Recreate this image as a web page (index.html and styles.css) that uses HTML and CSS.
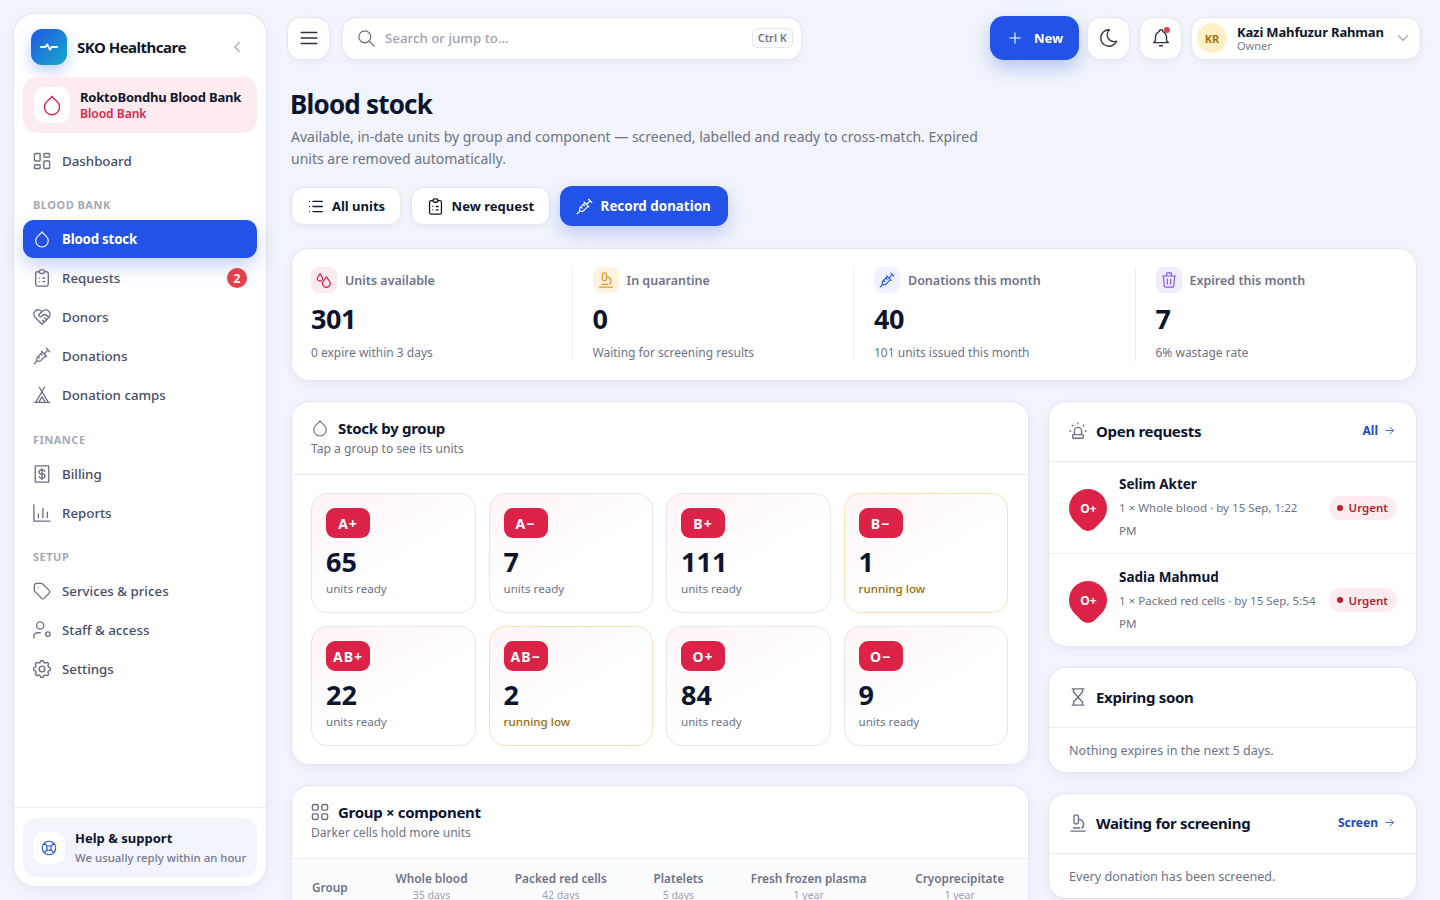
FILE: index.html
```html
<!DOCTYPE html>
<html lang="en">
<head>
    <meta charset="UTF-8">
    <meta name="viewport" content="width=device-width, initial-scale=1.0">
    <title>Blood stock - SKO Healthcare</title>
    <link rel="stylesheet" href="styles.css">
</head>
<body>

<!-- icon sprite -->
<svg class="sprite" xmlns="http://www.w3.org/2000/svg">
    <symbol id="i-drop" viewBox="0 0 24 24"><path d="M12 2.500c1.500 2.500 3.500 3.800 5.500 5.600a8.300 8.300 0 1 1 -11 0c2 -1.800 4 -3.100 5.500 -5.600z"/></symbol>
    <symbol id="i-drops" viewBox="2 2 20 20"><path d="M7 4l-2.300 3.800a3.200 3.200 0 1 0 4.600 0z"/><path d="M15 8l-3.700 5.500a4.700 4.700 0 1 0 7.400 0z"/></symbol>
    <symbol id="i-dash" viewBox="2.500 2.500 19 19"><path d="M5 4h4a1 1 0 0 1 1 1v6a1 1 0 0 1-1 1h-4a1 1 0 0 1-1-1v-6a1 1 0 0 1 1-1M5 16h4a1 1 0 0 1 1 1v2a1 1 0 0 1-1 1h-4a1 1 0 0 1-1-1v-2a1 1 0 0 1 1-1M15 12h4a1 1 0 0 1 1 1v6a1 1 0 0 1-1 1h-4a1 1 0 0 1-1-1v-6a1 1 0 0 1 1-1M15 4h4a1 1 0 0 1 1 1v2a1 1 0 0 1-1 1h-4a1 1 0 0 1-1-1v-2a1 1 0 0 1 1-1"/></symbol>
    <symbol id="i-grid" viewBox="2.500 2.500 19 19"><rect x="4" y="4" width="6" height="6" rx="1.500"/><rect x="14" y="4" width="6" height="6" rx="1.500"/><rect x="4" y="14" width="6" height="6" rx="1.500"/><rect x="14" y="14" width="6" height="6" rx="1.500"/></symbol>
    <symbol id="i-clip" viewBox="4 2 16 20"><path d="M9 5h-2a2 2 0 0 0 -2 2v12a2 2 0 0 0 2 2h10a2 2 0 0 0 2 -2v-12a2 2 0 0 0 -2 -2h-2"/><path d="M9 5a2 2 0 0 1 2 -2h2a2 2 0 0 1 2 2v0a2 2 0 0 1 -2 2h-2a2 2 0 0 1 -2 -2z"/><path d="M9 12h.01M13 12h2M9 16h.01M13 16h2"/></symbol>
    <symbol id="i-heart" viewBox="2 2 20 20"><path d="M19.500 12.572l-7.500 7.428l-7.500 -7.428a5 5 0 1 1 7.500 -6.566a5 5 0 1 1 7.500 6.572"/><path d="M12 6l-3.293 3.293a1 1 0 0 0 0 1.414l.543 .543c.69 .69 1.810 .69 2.500 0l1 -1a3.182 3.182 0 0 1 4.500 0l2.250 2.250"/><path d="M12.500 15.500l2 2M15 13l2 2"/></symbol>
    <symbol id="i-syringe" viewBox="1.500 1.500 21 21"><path d="M17 3l4 4M19 5l-4.500 4.500M11.500 6.500l6 6M16.500 11.500l-6.500 6.500h-4v-4l6.500 -6.500M7.500 12.500l1.500 1.500M10.500 9.500l1.500 1.500M3 21l3 -3"/></symbol>
    <symbol id="i-tent" viewBox="1.500 1.500 21 21"><path d="M15 3l-10 17M9 3l10 17M3 20.500h18M8.500 20l3.500 -6l3.500 6"/></symbol>
    <symbol id="i-bill" viewBox="3 2 18 20"><path d="M4.500 3h15v18h-15z" stroke-dasharray="2 .6"/><path d="M15 9a2 2 0 0 0 -2 -1.500h-2a2.200 2.200 0 0 0 0 4.500h2a2.200 2.200 0 0 1 0 4.500h-2a2 2 0 0 1 -2 -1.500M12 6v12"/></symbol>
    <symbol id="i-chart" viewBox="2 2 20 20"><path d="M3 3v18h18M8 17v-4M13 17v-10M18 17v-6"/></symbol>
    <symbol id="i-tag" viewBox="1.500 1.500 21 21"><path d="M3 6v5.172a2 2 0 0 0 .586 1.414l7.710 7.710a2.410 2.410 0 0 0 3.408 0l5.592 -5.592a2.410 2.410 0 0 0 0 -3.408l-7.710 -7.710a2 2 0 0 0 -1.414 -.586h-5.172a3 3 0 0 0 -3 3z"/><path d="M7.500 7.500h.01"/></symbol>
    <symbol id="i-staff" viewBox="2 2 20 20"><circle cx="10" cy="7" r="4"/><path d="M3 21v-2a4 4 0 0 1 4 -4h3"/><circle cx="18.500" cy="16.500" r="2.500"/></symbol>
    <symbol id="i-gear" viewBox="2.500 2.500 19 19"><path d="M10.325 4.317c.426 -1.756 2.924 -1.756 3.350 0a1.724 1.724 0 0 0 2.573 1.066c1.543 -.94 3.310 .826 2.370 2.370a1.724 1.724 0 0 0 1.065 2.572c1.756 .426 1.756 2.924 0 3.350a1.724 1.724 0 0 0 -1.066 2.573c.94 1.543 -.826 3.310 -2.370 2.370a1.724 1.724 0 0 0 -2.572 1.065c-.426 1.756 -2.924 1.756 -3.350 0a1.724 1.724 0 0 0 -2.573 -1.066c-1.543 .94 -3.310 -.826 -2.370 -2.370a1.724 1.724 0 0 0 -1.065 -2.572c-1.756 -.426 -1.756 -2.924 0 -3.350a1.724 1.724 0 0 0 1.066 -2.573c-.94 -1.543 .826 -3.310 2.370 -2.370c1 .608 2.296 .07 2.572 -1.065z"/><path d="M9 12a3 3 0 1 0 6 0a3 3 0 0 0 -6 0"/></symbol>
    <symbol id="i-buoy" viewBox="0 0 24 24"><path d="M9 12a3 3 0 1 0 6 0a3 3 0 1 0 -6 0M3 12a9 9 0 1 0 18 0a9 9 0 1 0 -18 0M15 15l3.350 3.350M9 15l-3.350 3.350M5.650 5.650l3.350 3.350M18.350 5.650l-3.350 3.350"/></symbol>
    <symbol id="i-scope" viewBox="2 2 20 20"><path d="M4 21h16M7 17.500h7"/><rect x="7.500" y="3" width="5" height="10" rx="2.500"/><path d="M13 8a5.500 5.500 0 0 1 3.500 9.500"/></symbol>
    <symbol id="i-trash" viewBox="2 2 20 20"><path d="M4 7h16M10 11v6M14 11v6M5 7l1 12a2 2 0 0 0 2 2h8a2 2 0 0 0 2 -2l1 -12M9 7v-3a1 1 0 0 1 1 -1h4a1 1 0 0 1 1 1v3"/></symbol>
    <symbol id="i-alarm" viewBox="2 2 20 20"><path d="M8 16v-4a4 4 0 0 1 8 0v4M3 12h1M12 3v1M20 12h1M5.600 5.600l.7 .7M18.400 5.600l-.7 .7"/><rect x="6" y="16" width="12" height="4" rx="1"/></symbol>
    <symbol id="i-glass" viewBox="2 2 20 20"><path d="M5.500 3h13M5.500 21h13M7 3v3.500l5 5.500l5 5.500v3.500M17 3v3.500l-5 5.500l-5 5.500v3.500"/></symbol>
    <symbol id="i-arrow" viewBox="0 0 24 24"><path d="M5 12h14M13 18l6 -6M13 6l6 6"/></symbol>
</svg>

<div class="app">

    <aside class="sidebar">
        <div class="brand">
            <div class="brand-logo">
                <svg class="ic" viewBox="2 2 20 20"><path d="M3 12h5l2 -3l3 6l2 -3h6"/></svg>
            </div>
            <div class="brand-name">SKO Healthcare</div>
            <svg class="ic brand-toggle" viewBox="0 0 24 24"><path d="M15 6l-6 6l6 6"/></svg>
        </div>

        <div class="org">
            <div class="org-icon"><svg class="ic"><use href="#i-drop"/></svg></div>
            <div>
                <div class="org-name">RoktoBondhu Blood Bank</div>
                <div class="org-type">Blood Bank</div>
            </div>
        </div>

        <nav class="nav">
            <a class="nav-item"><svg class="ic"><use href="#i-dash"/></svg>Dashboard</a>

            <div class="nav-label">Blood bank</div>
            <a class="nav-item active"><svg class="ic"><use href="#i-drop"/></svg>Blood stock</a>
            <a class="nav-item"><svg class="ic"><use href="#i-clip"/></svg>Requests<span class="nav-badge">2</span></a>
            <a class="nav-item"><svg class="ic"><use href="#i-heart"/></svg>Donors</a>
            <a class="nav-item"><svg class="ic"><use href="#i-syringe"/></svg>Donations</a>
            <a class="nav-item"><svg class="ic"><use href="#i-tent"/></svg>Donation camps</a>

            <div class="nav-label">Finance</div>
            <a class="nav-item"><svg class="ic"><use href="#i-bill"/></svg>Billing</a>
            <a class="nav-item"><svg class="ic"><use href="#i-chart"/></svg>Reports</a>

            <div class="nav-label">Setup</div>
            <a class="nav-item"><svg class="ic"><use href="#i-tag"/></svg>Services &amp; prices</a>
            <a class="nav-item"><svg class="ic"><use href="#i-staff"/></svg>Staff &amp; access</a>
            <a class="nav-item"><svg class="ic"><use href="#i-gear"/></svg>Settings</a>
        </nav>

        <div class="side-foot">
            <div class="help">
                <div class="help-icon"><svg class="ic"><use href="#i-buoy"/></svg></div>
                <div>
                    <div class="help-title">Help &amp; support</div>
                    <div class="help-sub">We usually reply within an hour</div>
                </div>
            </div>
        </div>
    </aside>

    <main class="main">
        <header class="topbar">
            <button class="icon-btn menu">
                <svg class="ic" viewBox="0 0 24 24"><path d="M3.500 6h17M3.500 12h17M3.500 18h17"/></svg>
            </button>
            <div class="search">
                <svg class="ic" viewBox="2 2 20 20"><path d="M3 10a7 7 0 1 0 14 0a7 7 0 1 0 -14 0M21 21l-6 -6"/></svg>
                <span class="search-text">Search or jump to...</span>
                <span class="kbd">Ctrl K</span>
            </div>
            <button class="btn-new">
                <svg class="ic" viewBox="0 0 24 24"><path d="M12 5v14M5 12h14"/></svg>New
            </button>
            <button class="icon-btn">
                <svg class="ic" viewBox="0 0 24 24"><path d="M12 3c.132 0 .263 0 .393 0a7.500 7.500 0 0 0 7.920 12.446a9 9 0 1 1 -8.313 -12.454z"/></svg>
            </button>
            <button class="icon-btn bell">
                <svg class="ic" viewBox="0 0 24 24"><path d="M10 5a2 2 0 1 1 4 0a7 7 0 0 1 4 6v3a4 4 0 0 0 2 3h-16a4 4 0 0 0 2 -3v-3a7 7 0 0 1 4 -6M10.500 20.500h3"/></svg>
                <span class="bell-dot"></span>
            </button>
            <div class="user">
                <div class="user-avatar">KR</div>
                <div class="user-info">
                    <div class="user-name">Kazi Mahfuzur Rahman</div>
                    <div class="user-role">Owner</div>
                </div>
                <svg class="ic" viewBox="0 0 24 24"><path d="M6 9l6 6l6 -6"/></svg>
            </div>
        </header>

        <div class="content">
            <h1 class="page-title">Blood stock</h1>
            <p class="page-desc">Available, in-date units by group and component — screened, labelled and ready to cross-match. Expired units are removed automatically.</p>

            <div class="actions">
                <button class="btn"><svg class="ic" viewBox="2 2 20 20"><path d="M9 6h11M9 12h11M9 18h11M5 6v.01M5 12v.01M5 18v.01"/></svg>All units</button>
                <button class="btn"><svg class="ic"><use href="#i-clip"/></svg>New request</button>
                <button class="btn primary"><svg class="ic"><use href="#i-syringe"/></svg>Record donation</button>
            </div>

            <section class="card stats">
                <div class="stat">
                    <div class="stat-head"><span class="chip red"><svg class="ic"><use href="#i-drops"/></svg></span>Units available</div>
                    <div class="stat-num">301</div>
                    <div class="stat-sub">0 expire within 3 days</div>
                </div>
                <div class="stat">
                    <div class="stat-head"><span class="chip amber"><svg class="ic"><use href="#i-scope"/></svg></span>In quarantine</div>
                    <div class="stat-num">0</div>
                    <div class="stat-sub">Waiting for screening results</div>
                </div>
                <div class="stat">
                    <div class="stat-head"><span class="chip blue"><svg class="ic"><use href="#i-syringe"/></svg></span>Donations this month</div>
                    <div class="stat-num">40</div>
                    <div class="stat-sub">101 units issued this month</div>
                </div>
                <div class="stat">
                    <div class="stat-head"><span class="chip violet"><svg class="ic"><use href="#i-trash"/></svg></span>Expired this month</div>
                    <div class="stat-num">7</div>
                    <div class="stat-sub">6% wastage rate</div>
                </div>
            </section>

            <div class="columns">
                <div class="col">
                    <section class="card">
                        <div class="card-head tall">
                            <div class="card-title"><svg class="ic"><use href="#i-drop"/></svg>Stock by group</div>
                            <div class="card-sub">Tap a group to see its units</div>
                        </div>
                        <div class="groups">
                            <div class="tile"><span class="blood">A+</span><div class="tile-num">65</div><div class="tile-sub">units ready</div></div>
                            <div class="tile"><span class="blood">A−</span><div class="tile-num">7</div><div class="tile-sub">units ready</div></div>
                            <div class="tile"><span class="blood">B+</span><div class="tile-num">111</div><div class="tile-sub">units ready</div></div>
                            <div class="tile low"><span class="blood">B−</span><div class="tile-num">1</div><div class="tile-sub">running low</div></div>
                            <div class="tile"><span class="blood">AB+</span><div class="tile-num">22</div><div class="tile-sub">units ready</div></div>
                            <div class="tile low"><span class="blood">AB−</span><div class="tile-num">2</div><div class="tile-sub">running low</div></div>
                            <div class="tile"><span class="blood">O+</span><div class="tile-num">84</div><div class="tile-sub">units ready</div></div>
                            <div class="tile"><span class="blood">O−</span><div class="tile-num">9</div><div class="tile-sub">units ready</div></div>
                        </div>
                    </section>

                    <section class="card">
                        <div class="card-head tall">
                            <div class="card-title"><svg class="ic"><use href="#i-grid"/></svg>Group × component</div>
                            <div class="card-sub">Darker cells hold more units</div>
                        </div>
                        <table class="matrix">
                            <thead>
                                <tr>
                                    <th>Group</th>
                                    <th>Whole blood<small>35 days</small></th>
                                    <th>Packed red cells<small>42 days</small></th>
                                    <th>Platelets<small>5 days</small></th>
                                    <th>Fresh frozen plasma<small>1 year</small></th>
                                    <th>Cryoprecipitate<small>1 year</small></th>
                                </tr>
                            </thead>
                        </table>
                    </section>
                </div>

                <div class="col">
                    <section class="card">
                        <div class="card-head row">
                            <div class="card-title"><svg class="ic"><use href="#i-alarm"/></svg>Open requests</div>
                            <a class="card-link">All<svg class="ic"><use href="#i-arrow"/></svg></a>
                        </div>
                        <div class="req">
                            <div class="drop"><span>O+</span></div>
                            <div class="req-info">
                                <div class="req-name">Selim Akter</div>
                                <div class="req-meta">1 × Whole blood · by 15 Sep, 1:22 PM</div>
                            </div>
                            <span class="urgent">Urgent</span>
                        </div>
                        <div class="req">
                            <div class="drop"><span>O+</span></div>
                            <div class="req-info">
                                <div class="req-name">Sadia Mahmud</div>
                                <div class="req-meta">1 × Packed red cells · by 15 Sep, 5:54 PM</div>
                            </div>
                            <span class="urgent">Urgent</span>
                        </div>
                    </section>

                    <section class="card">
                        <div class="card-head row">
                            <div class="card-title"><svg class="ic"><use href="#i-glass"/></svg>Expiring soon</div>
                        </div>
                        <div class="empty">Nothing expires in the next 5 days.</div>
                    </section>

                    <section class="card">
                        <div class="card-head row">
                            <div class="card-title"><svg class="ic"><use href="#i-scope"/></svg>Waiting for screening</div>
                            <a class="card-link">Screen<svg class="ic"><use href="#i-arrow"/></svg></a>
                        </div>
                        <div class="empty">Every donation has been screened.</div>
                    </section>
                </div>
            </div>
        </div>
    </main>
</div>

</body>
</html>
```

FILE: styles.css
```css
* {
    margin: 0;
    padding: 0;
    box-sizing: border-box;
}

html, body {
    height: 100%;
    overflow: hidden;
}

body {
    background-color: #f1f4fb;
    color: #0f172a;
    font-family: "Noto Sans", "Open Sans", sans-serif;
    font-size: 14px;
}

button {
    font-family: inherit;
    cursor: pointer;
}

.sprite {
    display: none;
}

.ic {
    width: 18px;
    height: 18px;
    flex: none;
    fill: none;
    stroke: currentColor;
    stroke-width: 1.5;
    stroke-linecap: round;
    stroke-linejoin: round;
}

.app {
    display: flex;
    height: 900px;
    gap: 20px;
}

/* sidebar */

.sidebar {
    width: 254px;
    flex: none;
    margin: 13px 0 13px 13px;
    display: flex;
    flex-direction: column;
    background-color: #fff;
    border: 1px solid #e3e6ee;
    border-radius: 22px;
    box-shadow: 0 4px 14px rgba(30, 50, 100, 0.05);
}

.brand {
    display: flex;
    align-items: center;
    gap: 10px;
    padding: 15px 20px 12px 17px;
}

.brand-logo {
    width: 36px;
    height: 36px;
    display: flex;
    align-items: center;
    justify-content: center;
    color: #fff;
    border-radius: 11px;
    background: linear-gradient(135deg, #2456e8, #14a9c4);
    box-shadow: 0 6px 14px rgba(36, 86, 232, 0.28);
}

.brand-logo .ic {
    stroke-width: 2;
}

.brand-name {
    flex: 1;
    font-size: 15px;
    font-weight: 700;
    letter-spacing: -0.5px;
}

.brand-toggle {
    color: #9ca3b4;
}

.org {
    display: flex;
    align-items: center;
    gap: 10px;
    height: 56px;
    margin: 0 9px;
    padding: 0 11px;
    background-color: #fdecef;
    border-radius: 14px;
}

.org-icon {
    width: 36px;
    height: 36px;
    display: flex;
    align-items: center;
    justify-content: center;
    flex: none;
    background-color: #fff;
    color: #d9264a;
    border-radius: 11px;
}

.org-icon .ic {
    width: 22px;
    height: 22px;
}

.org-name {
    font-size: 13px;
    font-weight: 700;
    line-height: 18px;
    letter-spacing: -0.2px;
    white-space: nowrap;
}

.org-type {
    font-size: 12px;
    font-weight: 600;
    line-height: 16px;
    color: #d9264a;
}

.nav {
    flex: 1;
    display: flex;
    flex-direction: column;
    gap: 1px;
    padding: 9px 9px 0;
}

.nav-item {
    display: flex;
    align-items: center;
    gap: 11px;
    height: 38px;
    flex: none;
    padding: 0 10px;
    font-size: 13.3px;
    font-weight: 500;
    color: #474d66;
    border-radius: 11px;
}

.nav-item .ic {
    color: #6b7186;
}

.nav-item.active {
    background-color: #2352e8;
    color: #fff;
    font-weight: 700;
    letter-spacing: -0.2px;
    box-shadow: 0 8px 18px rgba(35, 82, 232, 0.25);
}

.nav-item.active .ic {
    color: #fff;
}

.nav-badge {
    margin-left: auto;
    width: 20px;
    height: 20px;
    display: flex;
    align-items: center;
    justify-content: center;
    background-color: #e5404a;
    color: #fff;
    border-radius: 50%;
    font-size: 12px;
    font-weight: 700;
}

.nav-label {
    padding: 16.5px 10px 7px;
    font-size: 11px;
    line-height: 15px;
    font-weight: 700;
    letter-spacing: 0.5px;
    text-transform: uppercase;
    color: #a4a9b8;
}

.nav-item:first-child + .nav-label {
    padding-top: 16px;
}

.side-foot {
    padding: 10px 9px 9px;
    border-top: 1px solid #eceef3;
}

.help {
    display: flex;
    align-items: center;
    gap: 10px;
    height: 59px;
    padding: 0 10px;
    background-color: #f1f4fb;
    border-radius: 14px;
}

.help-icon {
    width: 32px;
    height: 32px;
    display: flex;
    align-items: center;
    justify-content: center;
    flex: none;
    background-color: #fff;
    color: #2352e8;
    border-radius: 10px;
}

.help-title {
    font-size: 13px;
    font-weight: 700;
    line-height: 19px;
}

.help-sub {
    font-size: 11.4px;
    font-weight: 500;
    line-height: 19px;
    color: #757a8c;
    white-space: nowrap;
}

/* topbar */

.main {
    flex: 1;
    min-width: 0;
    padding-right: 19px;
    overflow: hidden;
}

.topbar {
    display: flex;
    align-items: center;
    height: 46px;
    margin-top: 15px;
}

.icon-btn {
    position: relative;
    width: 43px;
    height: 43px;
    flex: none;
    display: flex;
    align-items: center;
    justify-content: center;
    background-color: #fff;
    border: 1px solid #e3e6ee;
    border-radius: 14px;
    color: #2c3148;
    box-shadow: 0 2px 6px rgba(30, 50, 100, 0.05);
}

.icon-btn .ic {
    width: 22px;
    height: 22px;
}

.icon-btn.menu {
    margin-right: 12px;
}

.icon-btn.bell {
    margin: 0 9px;
}

.search {
    width: 460px;
    height: 43px;
    display: flex;
    align-items: center;
    gap: 9px;
    padding: 0 8px 0 15px;
    background-color: #fff;
    border: 1px solid #e3e6ee;
    border-radius: 14px;
    box-shadow: 0 2px 6px rgba(30, 50, 100, 0.05);
}

.search .ic {
    width: 17px;
    height: 17px;
    margin-right: 1px;
    color: #6b7186;
}

.search-text {
    flex: 1;
    font-size: 13.3px;
    font-weight: 500;
    color: #9ca1b3;
}

.kbd {
    padding: 1px 5px;
    font-size: 11px;
    font-weight: 600;
    line-height: 16px;
    color: #737888;
    border: 1px solid #e3e6ee;
    border-radius: 6px;
    background-color: #fafbfd;
}

.btn-new {
    width: 89px;
    height: 44px;
    margin-left: auto;
    margin-right: 8px;
    flex: none;
    display: flex;
    align-items: center;
    justify-content: center;
    gap: 10px;
    background-color: #2352e8;
    color: #fff;
    border: none;
    border-radius: 14px;
    font-size: 13px;
    font-weight: 700;
    box-shadow: 0 8px 18px rgba(35, 82, 232, 0.28);
}

.bell-dot {
    position: absolute;
    top: 9px;
    right: 11px;
    width: 6px;
    height: 6px;
    background-color: #e5404a;
    border-radius: 50%;
}

.user {
    width: 230px;
    height: 43px;
    flex: none;
    display: flex;
    align-items: center;
    gap: 10px;
    padding: 0 10px 0 5px;
    background-color: #fff;
    border: 1px solid #e3e6ee;
    border-radius: 14px;
    box-shadow: 0 2px 6px rgba(30, 50, 100, 0.05);
}

.user > .ic {
    color: #9ca3b4;
    margin-left: auto;
}

.user-avatar {
    width: 30px;
    height: 30px;
    display: flex;
    align-items: center;
    justify-content: center;
    flex: none;
    background-color: #fdf0c7;
    color: #a9700e;
    border-radius: 50%;
    font-size: 11px;
    font-weight: 700;
}

.user-name {
    font-size: 13px;
    font-weight: 700;
    line-height: 14px;
    letter-spacing: -0.15px;
    white-space: nowrap;
}

.user-role {
    font-size: 11px;
    line-height: 13px;
    color: #757a8c;
}

/* page */

.content {
    padding: 0 4px;
}

.page-title {
    margin: 25px 0 0 -1px;
    font-size: 26px;
    font-weight: 700;
    line-height: 36px;
    letter-spacing: -0.8px;
    color: #0c1530;
}

.page-desc {
    max-width: 700px;
    margin-top: 4px;
    font-size: 14px;
    line-height: 22px;
    color: #6d7386;
}

.actions {
    display: flex;
    align-items: center;
    gap: 9.5px;
    margin-top: 16px;
}

.btn {
    height: 38px;
    display: flex;
    align-items: center;
    gap: 8px;
    padding: 0 15px;
    background-color: #fff;
    border: 1px solid #e3e6ee;
    border-radius: 12px;
    font-size: 13px;
    font-weight: 700;
    color: #0f172a;
    box-shadow: 0 2px 6px rgba(30, 50, 100, 0.05);
}

.btn .ic {
    width: 17px;
    height: 17px;
}

.btn.primary {
    height: 40px;
    padding: 0 17px 0 16px;
    background-color: #2352e8;
    border: none;
    color: #fff;
    font-size: 13.4px;
    box-shadow: 0 8px 18px rgba(35, 82, 232, 0.25);
}

.card {
    background-color: #fff;
    border: 1px solid #e3e6ee;
    border-radius: 18px;
    box-shadow: 0 3px 10px rgba(30, 50, 100, 0.05);
    overflow: hidden;
}

.stats {
    display: grid;
    grid-template-columns: repeat(4, 1fr);
    margin-top: 22px;
    padding: 19px 0 20px;
    border: none;
    box-shadow: inset 0 0 0 1px #e3e6ee, 0 3px 10px rgba(30, 50, 100, 0.05);
}

.stat {
    padding: 0 20px;
    border-right: 1px solid #eceef3;
}

.stat:last-child {
    border-right: none;
}

.stat-head {
    display: flex;
    align-items: center;
    gap: 8px;
    height: 26px;
    font-size: 12.5px;
    font-weight: 600;
    color: #6d7386;
}

.chip {
    width: 26px;
    height: 26px;
    display: flex;
    align-items: center;
    justify-content: center;
    border-radius: 8px;
}

.chip .ic {
    width: 16px;
    height: 16px;
}

.chip.red { background-color: #fdecef; color: #d9264a; }
.chip.amber { background-color: #fdf3e0; color: #e09a2b; }
.chip.blue { background-color: #eef2fe; color: #2352e8; }
.chip.violet { background-color: #f0ecfe; color: #7c5ce6; }

.stat-num {
    margin-top: 7px;
    font-size: 27px;
    font-weight: 700;
    line-height: 38px;
    letter-spacing: -0.5px;
    color: #0c1530;
}

.stat-sub {
    margin-top: 6px;
    font-size: 12px;
    line-height: 17px;
    color: #6d7386;
}

.columns {
    display: grid;
    grid-template-columns: 1fr 369px;
    gap: 19px;
    margin-top: 20px;
}

.col {
    display: flex;
    flex-direction: column;
    gap: 20px;
    min-width: 0;
}

.card-head {
    padding: 0 20px;
    border-bottom: 1px solid #eceef3;
}

.card-head.tall {
    height: 73px;
    padding: 15px 19px 0;
}

.card-head.row {
    height: 60px;
    padding-bottom: 2px;
    display: flex;
    align-items: center;
    justify-content: space-between;
}

.card-title {
    display: flex;
    align-items: center;
    gap: 9px;
    font-size: 15px;
    font-weight: 700;
    line-height: 22px;
    letter-spacing: -0.3px;
    color: #0c1530;
}

.card-title .ic {
    color: #6b7186;
}

.card-sub {
    font-size: 12.1px;
    line-height: 20px;
    color: #6d7386;
}

.card-link {
    display: flex;
    align-items: center;
    gap: 5px;
    font-size: 12px;
    font-weight: 700;
    color: #2049c4;
}

.card-link .ic {
    width: 13px;
    height: 13px;
}

.groups {
    display: grid;
    grid-template-columns: repeat(4, 1fr);
    gap: 13px;
    padding: 18px 20px 18px 19px;
}

.tile {
    height: 120px;
    padding: 14px;
    border: 1px solid #e3e6ee;
    border-radius: 16px;
    background: linear-gradient(150deg, #fff4f5, #fff 55%);
}

.tile.low {
    border-color: #f6e2b8;
}

.blood {
    display: inline-flex;
    align-items: center;
    justify-content: center;
    min-width: 44px;
    height: 30px;
    padding: 0 7px;
    background-color: #dc2347;
    color: #fff;
    border-radius: 9px;
    font-size: 14px;
    font-weight: 700;
    letter-spacing: 1px;
}

.tile-num {
    margin-top: 6px;
    font-size: 27px;
    font-weight: 700;
    line-height: 36px;
    color: #0c1530;
}

.tile-sub {
    margin-top: 1px;
    font-size: 11.6px;
    line-height: 16px;
    color: #6d7386;
}

.tile.low .tile-sub {
    color: #9a6a0c;
    font-weight: 500;
}

.matrix {
    width: 100%;
    border-collapse: collapse;
    background-color: #fafbfd;
}

.matrix th {
    padding: 11px 20px;
    font-size: 11.8px;
    font-weight: 600;
    line-height: 17px;
    color: #6d7386;
    text-align: center;
}

.matrix th:first-child {
    text-align: left;
}

.matrix small {
    display: block;
    font-size: 10.5px;
    font-weight: 400;
    line-height: 17px;
    color: #9ca1b3;
}

.req {
    display: flex;
    align-items: center;
    gap: 12px;
    height: 92px;
    padding: 0 19px 0 20px;
    border-bottom: 1px solid #eceef3;
}

.req:last-child {
    border-bottom: none;
}

.drop {
    width: 38px;
    height: 38px;
    flex: none;
    display: flex;
    align-items: center;
    justify-content: center;
    background-color: #dc2347;
    color: #fff;
    border-radius: 50% 50% 50% 25%;
    transform: rotate(-45deg);
    font-size: 12px;
    font-weight: 700;
}

.drop span {
    transform: rotate(45deg);
}

.req-info {
    flex: 1;
    min-width: 0;
}

.req-name {
    font-size: 13.5px;
    font-weight: 700;
    line-height: 23px;
    color: #0c1530;
}

.req-meta {
    font-size: 11.6px;
    line-height: 23px;
    color: #6d7386;
}

.urgent {
    display: flex;
    align-items: center;
    gap: 6px;
    flex: none;
    height: 24px;
    padding: 0 9px 0 8px;
    background-color: #fdecef;
    color: #b3202f;
    border-radius: 12px;
    font-size: 11.5px;
    font-weight: 600;
}

.urgent::before {
    content: "";
    width: 6px;
    height: 6px;
    background-color: #b3202f;
    border-radius: 50%;
}

.empty {
    padding: 13px 20px 12px;
    font-size: 12.6px;
    line-height: 19px;
    color: #6d7386;
}
```
